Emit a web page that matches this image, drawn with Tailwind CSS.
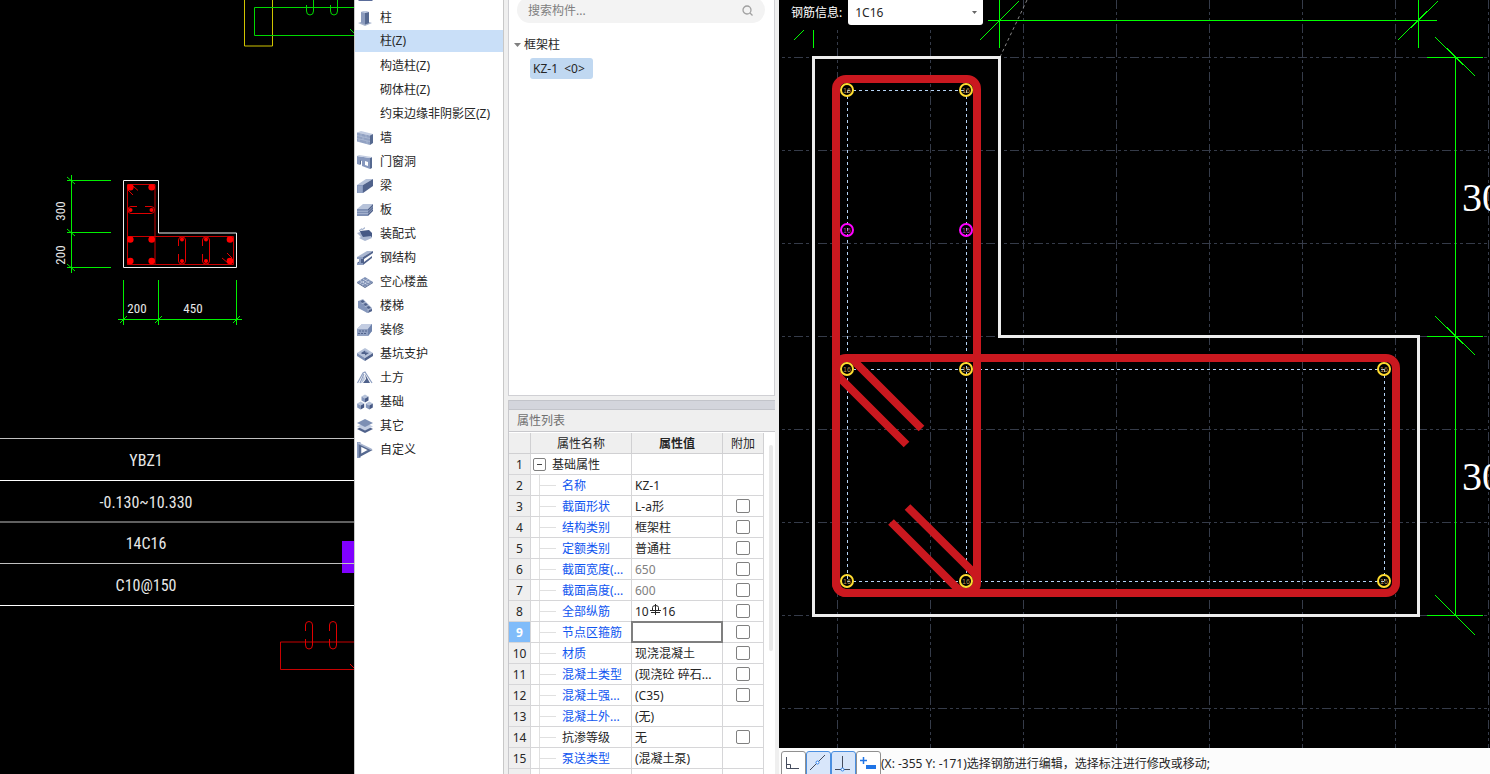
<!DOCTYPE html>
<html lang="zh-CN">
<head>
<meta charset="utf-8">
<title>柱构件属性</title>
<script src="https://cdn.jsdelivr.net/npm/@tailwindcss/browser@4"></script>
</head>
<body class="h-screen overflow-hidden bg-[#efefef] font-['Noto_Sans','Noto_Sans_CJK_SC',sans-serif] text-[12px] leading-4 text-[#262626]">
<div class="flex h-full">

  <!-- CAD drawing -->
  <section class="w-[354px] shrink-0 overflow-hidden bg-black" aria-label="CAD 图纸">
    <svg class="block h-full w-full" fill="none">
      <path d="M244.500 0V46H272.500V0" stroke="#d0c400"/>
      <g stroke="#00d800">
        <path d="M354 7.500H254.500V35.500H354"/>
        <path d="M306.500 5V11Q306.500 15 310 15T313.500 11V0M330.500 5V11Q330.500 15 334 15T337.500 11V0M350 29L354 33"/>
      </g>
      <path d="M123.500 180.500H158.500V233H236.500V267.500H123.500Z" stroke="#f0f0f0"/>
      <g stroke="#c80000">
        <path d="M127.500 184.500H155V264.500H127.500ZM127.500 236.500H233.500V264.500H127.500"/>
        <path stroke="#e00000" d="M137 206.500H131Q128 206.500 128 210T131 213.500H151Q154.500 213.500 154.500 210T151 206.500H145"/>
        <path stroke="#e00000" d="M178.500 246V240Q178.500 237 182 237T185.500 240V261Q185.500 264 182 264T178.500 261V254M202.500 246V240Q202.500 237 206 237T209.500 240V261Q209.500 264 206 264T202.500 261V254"/>
        <path stroke="#e00000" d="M133 186L138 190.500M128 190L133 195M222 258L228 263M227 253L232 258"/>
      </g>
      <g fill="#f00">
        <circle cx="130.300" cy="187.300" r="3.300"/><circle cx="151.700" cy="187.300" r="3.300"/>
        <circle cx="130.300" cy="239.500" r="3.300"/><circle cx="151.700" cy="239.500" r="3.300"/>
        <circle cx="130.300" cy="261" r="3.300"/><circle cx="151.700" cy="261" r="3.300"/>
        <circle cx="230" cy="239.500" r="3.300"/><circle cx="230" cy="261" r="3.300"/>
        <circle cx="130.500" cy="210" r="2"/><circle cx="151.500" cy="210" r="2"/>
        <circle cx="182" cy="239.500" r="2"/><circle cx="182" cy="261" r="2"/>
        <circle cx="206" cy="239.500" r="2"/><circle cx="206" cy="261" r="2"/>
      </g>
      <path stroke="#00f000" d="M71.500 175V273M67 180.500H111M67 232.500H111M67 267.500H111M67 177L75 184M67 229L75 236M67 264L75 271M118 319.500H242M123.500 280V325M158.500 280V325M236.500 280V325M120 323L127 316M155 323L162 316M233 323L240 316"/>
      <path stroke="#fff" d="M0 480.500H354M0 605.500H354"/>
      <path stroke="#c0c0c0" d="M0 438.500H354M0 522H354"/>
      <path fill="#8000ff" d="M342 541H354V573H342Z"/>
      <path stroke="#c0c0c0" d="M0 563.500H354"/>
      <g stroke="#c80000">
        <path d="M354 642H280.500V669.500H354"/>
        <path stroke="#e00000" d="M305.500 631V625Q305.500 621.500 309 621.500T312.500 625V645Q312.500 649 309 649T305.500 645V639M329.500 631V625Q329.500 621.500 333 621.500T336.500 625V645Q336.500 649 333 649T329.500 645V639M350 664L354 668"/>
      </g>
      <g fill="#e8e8e8" text-anchor="middle" class="font-['Liberation_Sans_Narrow','Roboto_Condensed','Liberation_Sans',sans-serif]">
        <g font-size="13">
          <text x="137" y="313">200</text>
          <text x="193" y="313">450</text>
          <text transform="translate(65 211) rotate(-90)">300</text>
          <text transform="translate(65 255) rotate(-90)">200</text>
        </g>
        <g font-size="16">
          <text x="146" y="466">YBZ1</text>
          <text x="146" y="508">-0.130~10.330</text>
          <text x="146" y="549">14C16</text>
          <text x="146" y="591">C10@150</text>
        </g>
      </g>
    </svg>
  </section>

  <!-- Component categories -->
  <nav class="w-[150px] shrink-0 overflow-hidden border-x border-[#c8c8c8] bg-white" aria-label="构件类型">
    <div class="ml-[3px] h-1.5"><svg width="16" height="2"><path d="M0 0H15L14 1H1Z" fill="#5a6c9a"/></svg></div>
    <ul>
      <li><a href="#" class="flex h-6 items-center gap-[7px] pl-0.5"><svg class="size-4" viewBox="0 0 16 16"><path d="M1 13L8 10.500 15 13 8 16Z" fill="#a9b5cd"/><path d="M4 2L8 1 12 2V13L8 14.500 4 13Z" fill="#8b9bbd"/><path d="M8 3L12 2V13L8 14.500Z" fill="#566990"/><path d="M4 2L8 1 12 2 8 3Z" fill="#c3cde2"/></svg>柱</a></li>
      <li class="pb-0.5"><a href="#" aria-current="true" class="-mt-px flex h-[23px] items-center border-t border-white bg-[#c9dff8] pl-[25px]">柱(Z)</a></li>
      <li><a href="#" class="flex h-6 items-center pl-[25px]">构造柱(Z)</a></li>
      <li><a href="#" class="flex h-6 items-center pl-[25px]">砌体柱(Z)</a></li>
      <li><a href="#" class="flex h-6 items-center pl-[25px] whitespace-nowrap">约束边缘非阴影区(Z)</a></li>
      <li><a href="#" class="flex h-6 items-center gap-[7px] pl-0.5"><svg class="size-4" viewBox="0 0 16 16"><path d="M0 2.500L4 1 16 4 13 5.500Z" fill="#c3cde2"/><path d="M0 2.500L13 5.500V15L0 11.500Z" fill="#91a1c2"/><path d="M13 5.500L16 4V13L13 15Z" fill="#566990"/><path d="M0 5.500L13 8.500M0 8.500L13 11.500M4 3.500V6.500M9 4.700V7.700M6 7V10M2 9V12M10 11V14" stroke="#b7c3da" stroke-width=".6"/></svg>墙</a></li>
      <li><a href="#" class="flex h-6 items-center gap-[7px] pl-0.5"><svg class="size-4" viewBox="0 0 16 16"><path fill="#8798bd" fill-rule="evenodd" d="M0 2L13 4V15L5 12V7L3 6.500V11L0 10ZM8 7V11L11 12V8Z"/><path fill="#566990" d="M13 4L15 3V14L13 15ZM3 6.500L4 6V10L3 11Z"/><path fill="#c3cde2" d="M0 2L2 1 15 3 13 4Z"/></svg>门窗洞</a></li>
      <li><a href="#" class="flex h-6 items-center gap-[7px] pl-0.5"><svg class="size-4" viewBox="0 0 16 16"><path fill="#8798bd" d="M0 7H6V15H0Z"/><path fill="#b7c3da" d="M0 7L9 1H16L6 7Z"/><path fill="#50628b" d="M6 7L16 1V8L6 15Z"/><path d="M2 8V15M4 8V15" stroke="#b7c3da" stroke-width=".6"/></svg>梁</a></li>
      <li><a href="#" class="flex h-6 items-center gap-[7px] pl-0.5"><svg class="size-4" viewBox="0 0 16 16"><path fill="#b7c3da" d="M0 7L6 2H16L11 7Z"/><path fill="#7d8fb4" d="M0 7H11V14H0Z"/><path fill="#50628b" d="M11 7L16 2V9L11 14Z"/><path d="M0 9.300H11L16 4.500M0 11.600H11L16 6.800" fill="none" stroke="#c3cde2" stroke-width=".6"/></svg>板</a></li>
      <li><a href="#" class="flex h-6 items-center gap-[7px] pl-0.5"><svg class="size-4" viewBox="0 0 16 16"><path fill="#465985" d="M3 5L12 4 15 7V11L8 13 4 11Z"/><path fill="#a9b6d0" d="M0 7L3 6 6 11 14 10 15 12 8 15 2 12 4 11ZM2 4L5 2V3.500L2 5.500ZM5 3L8 1V2.500L5 4.500Z"/></svg>装配式</a></li>
      <li><a href="#" class="flex h-6 items-center gap-[7px] pl-0.5"><svg class="size-4" viewBox="0 0 16 16"><path fill="#a9b6d0" d="M0 7L10 1H16L6 7Z"/><path fill="#50628b" d="M6 7L16 1V3L7 9V12L15 6V8L6 15H0V13L4 10V9H0V7Z"/><path fill="#8c9dc0" d="M0 7H6V9H4V13H6V15H0V13H2V9H0Z"/></svg>钢结构</a></li>
      <li><a href="#" class="flex h-6 items-center gap-[7px] pl-0.5"><svg class="size-4" viewBox="0 0 16 16"><path fill="#7d8fb4" d="M0 8L8 3 16 8 8 13Z"/><path d="M3 6.500L11 11M6 5L13.500 9.500M3 9.500L11 5M5 11L13.500 6.500" stroke="#d6deec" stroke-width=".9" stroke-dasharray="2 .8"/><path d="M0 8L8 13 16 8V9L8 14 0 9Z" fill="#566990"/></svg>空心楼盖</a></li>
      <li><a href="#" class="flex h-6 items-center gap-[7px] pl-0.5"><svg class="size-4" viewBox="0 0 16 16"><path fill="#a9b6d0" d="M1 3L6 1 15 10V13L10 15 1 9Z"/><path fill="#50628b" d="M3 3L6 2 8 4 5 5ZM6 6L9 5 11 7 8 8ZM9 9L12 8 14 10 11 11ZM12 12L15 11V13L11 15Z"/><path fill="#8496bb" d="M1 3L3 3 5 6 7 6 8 9 10 9 11 15 1 10Z"/></svg>楼梯</a></li>
      <li><a href="#" class="flex h-6 items-center gap-[7px] pl-0.5"><svg class="size-4" viewBox="0 0 16 16"><path fill="#91a1c2" d="M0 7L5 2H15V9L11 14H0Z"/><path fill="#c3cde2" d="M0 7L5 2H15L11 7Z"/><path fill="#6f83ac" d="M11 7L15 2V9L11 14Z"/><path d="M2 9H11M1 11.500H10" stroke="#50628b" stroke-dasharray="2 1"/></svg>装修</a></li>
      <li><a href="#" class="flex h-6 items-center gap-[7px] pl-0.5"><svg class="size-4" viewBox="0 0 16 16"><path fill="#b7c3da" d="M0 7L8 2 16 7 8 12Z"/><path fill="#7d8fb4" d="M0 7L8 12V15L0 10Z"/><path fill="#50628b" d="M8 12L16 7V10L8 15ZM4 7L8 4.500V8L5 8ZM8 6L12 7 8 9.500Z"/><path fill="#8c9dc0" d="M8 4.500L12 7 8 6Z"/></svg>基坑支护</a></li>
      <li><a href="#" class="flex h-6 items-center gap-[7px] pl-0.5"><svg class="size-4" viewBox="0 0 16 16"><path d="M.5 13L6 3 8 2 15 13M3 13L7 4" fill="none" stroke="#8c9dc0" stroke-width="1.200"/><path fill="#50628b" d="M8 4L9 9 6 13H13Z"/><path fill="#b7c3da" d="M7 5L8 9 5 13H4Z"/></svg>土方</a></li>
      <li><a href="#" class="flex h-6 items-center gap-[7px] pl-0.5"><svg class="size-4" viewBox="0 0 16 16"><g id="cube"><path fill="#b7c3da" d="M4.500 2.500L8 .5 11.500 2.500 8 4.500Z"/><path fill="#8496bb" d="M4.500 2.500L8 4.500V8.500L4.500 6.500Z"/><path fill="#465985" d="M8 4.500L11.500 2.500V6.500L8 8.500Z"/></g><use href="#cube" x="-4.300" y="7"/><use href="#cube" x="4.300" y="7"/></svg>基础</a></li>
      <li><a href="#" class="flex h-6 items-center gap-[7px] pl-0.5"><svg class="size-4" viewBox="0 0 16 16"><path fill="#50628b" d="M0 11L8 7 16 11 8 15Z"/><path fill="#c3cde2" d="M0 8.500L8 4.500 16 8.500 8 12.500Z"/><path fill="#7d8fb4" d="M0 5L8 1 16 5 8 9Z"/></svg>其它</a></li>
      <li><a href="#" class="flex h-6 items-center gap-[7px] pl-0.5"><svg class="size-4" viewBox="0 0 16 16"><path fill="#8c9dc0" d="M0 0H3.500V16H0Z"/><path fill="none" stroke="#566990" stroke-width="2.500" d="M3 3L13 8 3 13.500Z"/><path stroke="#a9b6d0" stroke-width="1.500" d="M1 1L14.500 7.500"/></svg>自定义</a></li>
    </ul>
  </nav>

  <!-- Component list and properties -->
  <div class="flex w-[275px] shrink-0 flex-col pr-1 pl-1">
    <section class="h-[396px] shrink-0 overflow-hidden border-x border-b border-[#d0d0d4] bg-white">
      <div class="-mt-[3px] mr-[9px] ml-2 flex h-[26px] items-center rounded-full bg-[#f3f3f3] pr-3 pl-[11px]">
        <input type="text" aria-label="搜索构件" placeholder="搜索构件..." class="min-w-0 flex-1 bg-transparent pt-0.5 outline-none placeholder:text-[#808080]">
        <svg width="11" height="11" viewBox="0 0 11 11" fill="none" stroke="#a0a0a0" stroke-width="1.300"><circle cx="5" cy="5" r="4"/><path d="M8 8L10.500 10.500"/></svg>
      </div>
      <div class="mt-3.5 flex items-center gap-[3px] pl-[5px]">
        <svg width="7" height="4"><path d="M0 0H7L3.500 4Z" fill="#808080"/></svg>
        <span>框架柱</span>
      </div>
      <button type="button" class="mt-[5px] ml-[21px] h-[21px] w-[63px] rounded-[3px] bg-[#c0d8f1] px-[3px] text-left whitespace-nowrap">KZ-1 &nbsp;&lt;0&gt;</button>
    </section>

    <section class="mt-1 flex min-h-0 flex-1 flex-col overflow-hidden border-l border-[#c8c8cc]">
      <div class="h-[10px] shrink-0 border-y border-[#c2c4ca] bg-[#d3d5dc]"></div>
      <h2 class="h-[22px] shrink-0 border-b border-[#c8c8cc] pl-2 leading-[22px] text-[#707070]">属性列表</h2>
      <div class="flex min-h-0 flex-1 overflow-hidden bg-white pt-px">
        <table class="h-fit w-[255px] shrink-0 table-fixed border-separate border-spacing-0 [&_td]:border-r [&_td]:border-b [&_td]:border-[#d6d6d8] [&_td]:whitespace-nowrap [&_td]:px-0 [&_td]:pb-0 [&_th]:border-r [&_th]:border-b [&_th]:border-[#d0d0d2] [&_th]:bg-[#efefef] [&_th]:px-0 [&_th]:pt-0.5 [&_th]:pb-0 [&_th]:font-normal [&_tr]:h-[21px]">
          <colgroup><col class="w-[22px]"><col class="w-[101px]"><col class="w-[91px]"><col class="w-[41px]"></colgroup>
          <thead><tr><th></th><th>属性名称</th><th><b>属性值</b></th><th>附加</th></tr></thead>
          <tbody id="props"></tbody>
        </table>
        <div class="mt-3 ml-[5px] h-[206px] w-1 rounded-full bg-[#e8e8e8]"></div>
      </div>
    </section>
  </div>

  <!-- Section editor -->
  <main class="flex min-w-0 flex-1 flex-col bg-black">
    <div class="relative min-h-0 flex-1 overflow-hidden">
      <svg class="block h-full w-full" fill="none">
        <g transform="translate(-779 0)">
          <g stroke="#353b49" stroke-dasharray="9 3 3 3 3 3">
            <path d="M770 57.500H2400M770 150.500H2400M770 243.500H2400M770 336.500H2400M770 429.500H2400M770 522.500H2400M770 615.500H2400M770 708.500H2400"/>
            <path d="M837.500 0V1600M930.500 0V1600M1023.500 0V1600M1116.500 0V1600M1209.500 0V1600M1302.500 0V1600M1395.500 0V1600M1488.500 0V1600"/>
          </g>
          <path fill="#000" d="M779 0H985V30H779Z"/>
          <g stroke="#0f0" shape-rendering="crispEdges">
            <path d="M988 20.500H1437M999.500 0V48M1418.500 0V48M813.500 30V48M1455.500 57V615M1427 57.500H1483M1427 336.500H1483M1427 615.500H1483"/>
            <path d="M980 40L1019 1M1398 40L1438 1M794 40L804 30M1435 37L1475 76M1435 316L1475 355M1435 595L1475 635"/>
          </g>
          <path d="M1000 57L1027 0" stroke="#888" stroke-dasharray="3 3"/>
          <path stroke="#ededed" stroke-width="3" d="M813.500 57.500H999.500V336.500H1418.500V615.500H813.500Z"/>
          <path stroke="#b5d3f5" stroke-dasharray="3 3" d="M847.500 90V581M966.500 90V581M847 90.500H966M847 369.500H1384M847 581.500H1384M1384.500 369V581"/>
          <g stroke="#ca181f" stroke-width="8">
            <rect x="836" y="79" width="141" height="514" rx="10"/>
            <rect x="836" y="358" width="560" height="235" rx="10"/>
            <path d="M906.500 444.500L840 378Q833 366 843 360Q851 355 857 364L921.500 428.500M891 522L957 588Q967 594 975 586Q979 579 973 572L907.500 507"/>
          </g>
          <path fill="#000" d="M840 369A7 7 0 0 1 854 369A7 7 0 0 1 840 369M959 581A7 7 0 0 1 973 581A7 7 0 0 1 959 581"/>
          <g stroke="#ffdc30" stroke-width="2">
            <circle cx="847" cy="90" r="6"/><circle cx="966" cy="90" r="6"/>
            <circle cx="847" cy="369" r="6"/><circle cx="966" cy="369" r="6"/><circle cx="1384" cy="369" r="6"/>
            <circle cx="847" cy="581" r="6"/><circle cx="966" cy="581" r="6"/><circle cx="1384" cy="581" r="6"/>
          </g>
          <g stroke="#f0f" stroke-width="2"><circle cx="847" cy="230" r="6"/><circle cx="966" cy="230" r="6"/></g>
          <g fill="#b09050" font-size="7" text-anchor="middle" class="font-['Liberation_Sans',sans-serif]">
            <text x="847" y="93">16</text><text x="966" y="93">16</text>
            <text x="847" y="372">16</text><text x="966" y="372">16</text><text x="1384" y="372">16</text>
            <text x="847" y="584">16</text><text x="966" y="584">16</text><text x="1384" y="584">16</text>
            <text x="847" y="233" fill="#a040a0">16</text><text x="966" y="233" fill="#a040a0">16</text>
          </g>
          <g fill="#fff" font-size="40" class="font-['Liberation_Serif',serif]">
            <text x="1462" y="211">300</text>
            <text x="1462" y="490">300</text>
          </g>
        </g>
      </svg>
      <div class="absolute top-0 left-3 flex h-[25px] items-center gap-1.5 text-white">
        <label for="bar" class="pt-px">钢筋信息:</label>
        <div class="relative">
          <select id="bar" class="block h-[25px] w-[135px] appearance-none rounded-b-[3px] bg-white pl-[7px] text-[#262626]"><option>1C16</option></select>
          <svg class="pointer-events-none absolute top-[11px] right-1.5" width="5" height="3"><path d="M0 0H5L2.500 3Z" fill="#666"/></svg>
        </div>
      </div>
    </div>
    <footer class="flex h-[26px] shrink-0 items-start overflow-hidden bg-[#fcfcfc] pt-[3px] pl-0.5">
      <button type="button" aria-label="正交" class="h-7 w-[25px] shrink-0 rounded-[3px] border border-[#909090] bg-white"><svg width="23" height="26" viewBox="0 0 23 26" fill="none" stroke="#444b5c"><path d="M4.500 5V16.500H17M4.500 12.500H8.500V16.500"/></svg></button>
      <button type="button" aria-label="中点" class="h-7 w-[25px] shrink-0 rounded-[3px] border border-[#4b8fe0] bg-[#d8e6fa]"><svg width="23" height="26" viewBox="0 0 23 26" fill="none" stroke="#444b5c"><path d="M3 18L18 3"/><circle cx="10.500" cy="10.500" r="1.500" fill="#fff" stroke="#2f80e8"/></svg></button>
      <button type="button" aria-label="垂足" class="h-7 w-[25px] shrink-0 rounded-[3px] border border-[#4b8fe0] bg-[#d8e6fa]"><svg width="23" height="26" viewBox="0 0 23 26" fill="none" stroke="#444b5c"><path d="M10.500 4V17M3 17.500H18"/><circle cx="10.500" cy="17.500" r="1.500" fill="#fff" stroke="#2f80e8"/></svg></button>
      <button type="button" aria-label="动态输入" class="h-7 w-[25px] shrink-0 rounded-[3px] border border-[#909090] bg-white"><svg width="23" height="26" viewBox="0 0 23 26" fill="none"><path stroke="#1f74e6" stroke-width="1.500" d="M3 8.500H10M6.500 5V12"/><path fill="#1f74e6" d="M9 13H19V17H9Z"/></svg></button>
      <p class="mt-[5px] whitespace-nowrap">(X: -355 Y: -171)选择钢筋进行编辑，选择标注进行修改或移动;</p>
    </footer>
  </main>
</div>

<script>
  const rebar = '<svg class="mx-px inline-block align-[1px]" width="11" height="11" viewBox="0 0 11 11" fill="none" stroke="#262626"><path d="M5.5 0V11M2.500 6.500V3.500Q2.500 1.500 5.500 1.500T8.500 3.500V6.500M0 6.500H11M1 8.500H10"/></svg>';
  // [name, value, has checkbox, name class, value class]
  const link = 'text-[#0f55f0]', plain = '', dim = 'text-[#808080]';
  const rows = [
    ['基础属性', '', false, plain, plain],
    ['名称', 'KZ-1', false, link, plain],
    ['截面形状', 'L-a形', true, link, plain],
    ['结构类别', '框架柱', true, link, plain],
    ['定额类别', '普通柱', true, link, plain],
    ['截面宽度(...', '650', true, link, dim],
    ['截面高度(...', '600', true, link, dim],
    ['全部纵筋', '10' + rebar + '16', true, link, plain],
    ['节点区箍筋', null, true, link, plain],
    ['材质', '现浇混凝土', true, link, plain],
    ['混凝土类型', '(现浇砼 碎石...', true, link, plain],
    ['混凝土强...', '(C35)', true, link, plain],
    ['混凝土外...', '(无)', false, link, plain],
    ['抗渗等级', '无', true, plain, plain],
    ['泵送类型', '(混凝土泵)', false, link, plain],
    ['', '', false, plain, plain]
  ];
  document.getElementById('props').innerHTML = rows.map(([name, value, check, nameCls, valueCls], i) => {
    const number = value === null
      ? '<td class="bg-[#80bcfa] pt-0.5 text-center font-bold text-white">' + (i + 1) + '</td>'
      : '<td class="bg-[#efefef] pt-0.5 text-center">' + (i < 15 ? i + 1 : '') + '</td>';
    const label = i === 0
      ? '<div class="flex h-5 items-center gap-1.5 pl-0.5"><button type="button" aria-label="折叠" class="flex size-[13px] items-center justify-center rounded-[2px] border border-[#808080]"><span class="h-px w-[5px] bg-[#444]"></span></button><span class="pt-0.5">' + name + '</span></div>'
      : '<div class="ml-2 flex h-5 items-center gap-1.5 border-l border-[#e0e0e0]"><span class="h-px w-4 bg-[#e0e0e0]"></span><span class="pt-0.5 ' + nameCls + '">' + name + '</span></div>';
    const cell = value === null
      ? '<td class="pt-0"><input type="text" aria-label="' + name + '" class="relative block h-5 w-[90px] bg-white outline-2 -outline-offset-1 outline-[#7f7f7f]"></td>'
      : '<td class="pt-0.5"><div class="h-4 pl-[3px] ' + valueCls + '">' + value + '</div></td>';
    const box = check
      ? '<input type="checkbox" aria-label="附加 ' + name + '" class="mx-auto block size-[14px] appearance-none rounded-[2px] border border-[#808080] bg-white">'
      : '';
    return '<tr>' + number + '<td class="pt-0">' + label + '</td>' + cell + '<td class="pt-0">' + box + '</td></tr>';
  }).join('');
</script>
</body>
</html>
